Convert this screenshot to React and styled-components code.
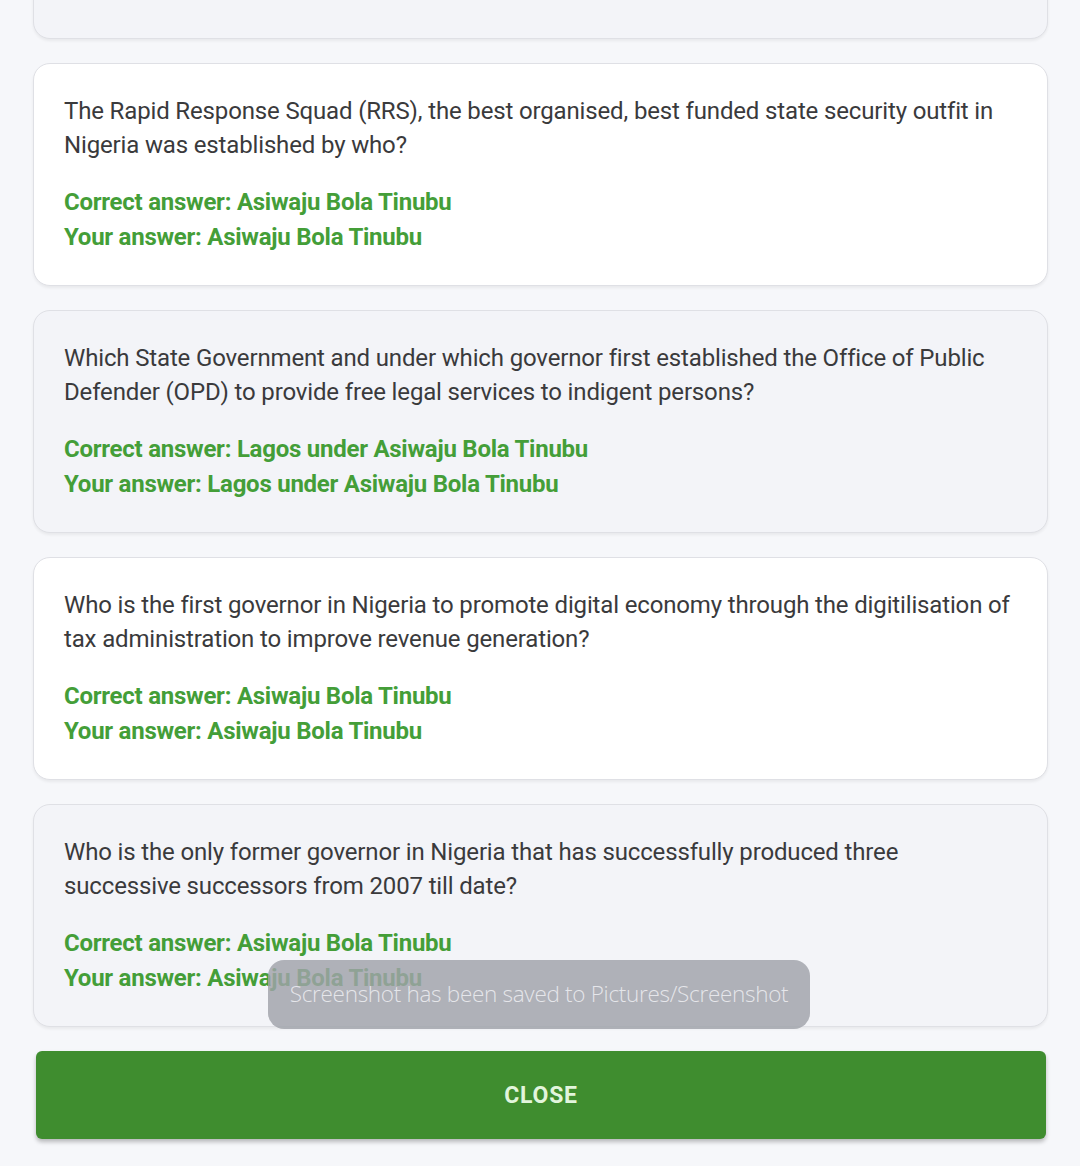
import React from "react";
import styled, { createGlobalStyle } from "styled-components";

const Global = createGlobalStyle`
  html, body { margin: 0; padding: 0; background: #f6f7fa; }
  body { font-family: Roboto, "Liberation Sans", Arial, sans-serif; overflow: hidden; }
`;

const Page = styled.div`
  position: relative;
  width: 1080px;
  height: 1166px;
  overflow: hidden;
  background: #f6f7fa;
`;

const List = styled.div`
  display: flex;
  flex-direction: column;
  gap: 24px;
  padding: 0 32px 0 33px;
  margin-top: -184px;
`;

const Card = styled.div`
  box-sizing: border-box;
  height: 223px;
  background: ${(p) => (p.$shaded ? "#f3f4f8" : "#ffffff")};
  border: 1.5px solid #dfe0e5;
  border-radius: 17px;
  box-shadow: 0 2px 3px rgba(0, 0, 0, 0.06);
  padding: 30px 33px 0 30px;
`;

const Question = styled.p`
  margin: 0;
  font-size: 24px;
  line-height: 34px;
  color: #3a3a3c;
  letter-spacing: -0.15px;
`;

const Answers = styled.div`
  margin-top: 23px;
  display: flex;
  flex-direction: column;
`;

const Answer = styled.div`
  font-size: 24px;
  line-height: 35px;
  font-weight: 700;
  letter-spacing: -0.25px;
  color: ${(p) => (p.$wrong ? "#f3c7cf" : "#449e38")};
`;

const Footer = styled.div`
  padding: 24px 34px 0 36px;
`;

const CloseButton = styled.button`
  width: 100%;
  height: 88px;
  border: none;
  border-radius: 6px;
  background: #3f8d2f;
  box-shadow: 0 3px 4px rgba(0, 0, 0, 0.25);
  color: #e2f5dc;
  font-family: Roboto, "Liberation Sans", Arial, sans-serif;
  font-size: 23px;
  font-weight: 700;
  letter-spacing: 0.8px;
  cursor: pointer;
`;

const Toast = styled.div`
  position: absolute;
  left: 268px;
  top: 960px;
  width: 542px;
  height: 69px;
  box-sizing: border-box;
  border-radius: 16px;
  background: rgba(160, 162, 170, 0.82);
  color: rgba(240, 240, 244, 0.85);
  font-family: "Open Sans", "Liberation Sans", sans-serif;
  font-size: 22.5px;
  font-weight: 300;
  letter-spacing: -0.3px;
  display: flex;
  align-items: center;
  justify-content: center;
  padding-bottom: 2px;
`;

const items = [
  {
    q: "Which governor in Nigeria pioneered the use of public-private partnership for infrastructure development?",
    c: "Correct answer: Asiwaju Bola Tinubu",
    y: "Your answer: Babatunde Fashola",
    wrong: true,
  },
  {
    q: "The Rapid Response Squad (RRS), the best organised, best funded state security outfit in Nigeria was established by who?",
    c: "Correct answer: Asiwaju Bola Tinubu",
    y: "Your answer: Asiwaju Bola Tinubu",
  },
  {
    q: "Which State Government and under which governor first established the Office of Public Defender (OPD) to provide free legal services to indigent persons?",
    c: "Correct answer: Lagos under Asiwaju Bola Tinubu",
    y: "Your answer: Lagos under Asiwaju Bola Tinubu",
  },
  {
    q: "Who is the first governor in Nigeria to promote digital economy through the digitilisation of tax administration to improve revenue generation?",
    c: "Correct answer: Asiwaju Bola Tinubu",
    y: "Your answer: Asiwaju Bola Tinubu",
  },
  {
    q: "Who is the only former governor in Nigeria that has successfully produced three successive successors from 2007 till date?",
    c: "Correct answer: Asiwaju Bola Tinubu",
    y: "Your answer: Asiwaju Bola Tinubu",
  },
];

export default function App() {
  return (
    <Page>
      <Global />
      <List>
        {items.map((it, i) => (
          <Card key={i} $shaded={i % 2 === 0}>
            <Question>{it.q}</Question>
            <Answers>
              <Answer>{it.c}</Answer>
              <Answer $wrong={it.wrong}>{it.y}</Answer>
            </Answers>
          </Card>
        ))}
      </List>
      <Footer>
        <CloseButton>CLOSE</CloseButton>
      </Footer>
      <Toast>Screenshot has been saved to Pictures/Screenshot</Toast>
    </Page>
  );
}
